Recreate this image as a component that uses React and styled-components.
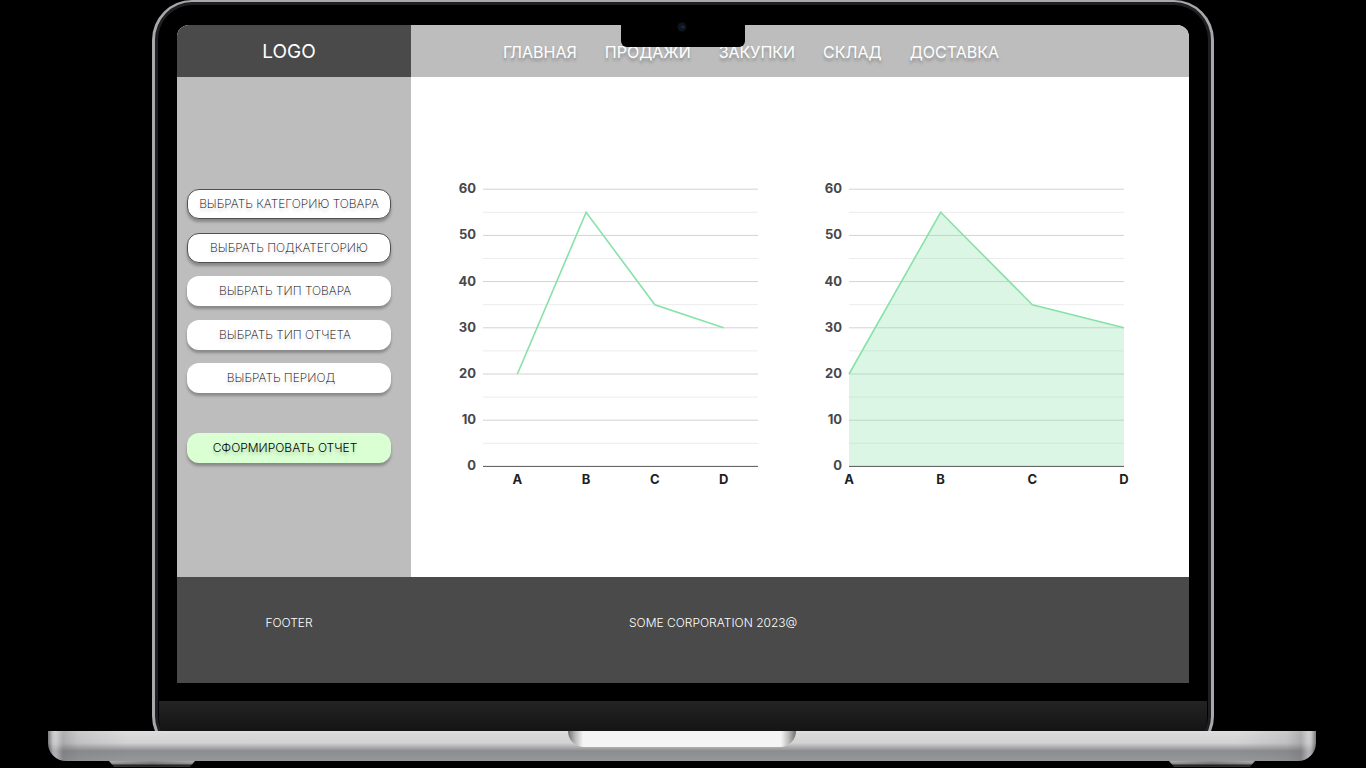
import React from "react";
import styled, { createGlobalStyle, css } from "styled-components";

const GlobalStyle = createGlobalStyle`
  *, *::before, *::after { box-sizing: border-box; }
  body {
    margin: 0;
    background: #000;
    color: #fff;
    font-family: Inter, "Liberation Sans", sans-serif;
  }
`;

const Page = styled.div`
  min-height: 100vh;
  overflow: hidden;
`;

/* Laptop */

const LidClip = styled.div`
  margin: 0 152px;
  overflow: hidden;
`;

const Lid = styled.div`
  margin-bottom: -25px;
  padding: 23px 22px 0;
  border: 3px solid #a8a8ac;
  border-top-width: 2px;
  border-radius: 40px;
  box-shadow: inset 0 0 0 3px #1f1f21;
  background: #000;
`;

const Chin = styled.div`
  height: 52px;
  margin: 18px -18px 0;
  border-radius: 0 0 34px 34px;
  background: linear-gradient(#232323, #141414 30px);
`;

const Base = styled.div`
  display: flex;
  justify-content: center;
  position: relative;
  height: 30px;
  margin: 0 50px 0 48px;
  border-radius: 0 0 18px 18px;
  background:
    linear-gradient(
      90deg,
      rgba(60, 60, 64, 0.6) 0,
      rgba(190, 190, 194, 0.6) 5px,
      rgba(200, 200, 204, 0.6) 8px,
      rgba(110, 110, 114, 0.4) 15px,
      rgba(120, 120, 124, 0.2) 30px,
      rgba(130, 130, 134, 0) 80px,
      rgba(130, 130, 134, 0) calc(100% - 80px),
      rgba(120, 120, 124, 0.2) calc(100% - 30px),
      rgba(110, 110, 114, 0.4) calc(100% - 15px),
      rgba(200, 200, 204, 0.6) calc(100% - 8px),
      rgba(190, 190, 194, 0.6) calc(100% - 5px),
      rgba(60, 60, 64, 0.6) 100%
    ),
    linear-gradient(#e2dde1 0, #dadada 3px, #d2d2d3 12px, #8b8c8e 20px, #97989a 30px);
`;

const Thumb = styled.div`
  width: 228px;
  height: 16px;
  border-radius: 0 0 16px 16px;
  background: linear-gradient(90deg, #6e6e70, #b8b8b8 7px, #f4f4f4 15px, #f4f4f4 calc(100% - 15px), #b8b8b8 calc(100% - 7px), #6e6e70);
`;

const Feet = styled.div`
  display: flex;
  justify-content: space-between;
  margin: 0 111px 0 109px;
`;

const Foot = styled.div`
  width: 86px;
  height: 6px;
  clip-path: polygon(0 0, 100% 0, 94% 100%, 6% 100%);
  background:
    linear-gradient(90deg, #99999900, #00000033 50%, #99999900),
    linear-gradient(#b0b1b0 0, #8b8c8b 3px, #262726 4px, #3b3c3b 6px);
`;

/* Application window */

const Screen = styled.div`
  position: relative;
  background: #fff;
  border-radius: 12px 12px 0 0;
`;

const Notch = styled.div`
  position: absolute;
  top: 0;
  left: 50%;
  width: 124px;
  height: 22px;
  margin-left: -62px;
  border-radius: 0 0 6px 6px;
  background: #000;
`;

const Camera = styled.svg`
  position: absolute;
  top: -3px;
  left: 56px;
  width: 10px;
  height: 10px;
`;

const columns = css`
  display: grid;
  grid-template-columns: 234px 1fr;
`;

const Header = styled.header`
  ${columns}
  height: 52px;
  border-radius: 12px 12px 0 0;
  overflow: hidden;
  background: #bdbdbd;
`;

const Logo = styled.a`
  display: flex;
  align-items: center;
  justify-content: center;
  padding-right: 10px;
  background: #4a4a4a;
  color: #fff;
  font-size: 19px;
  text-decoration: none;
`;

const Nav = styled.nav`
  display: flex;
  align-items: center;
  gap: 28px;
  padding: 1px 0 0 92px;
`;

const NavLink = styled.a`
  color: #fff;
  font-size: 16px;
  font-weight: 400;
  text-decoration: none;
  text-shadow: 0 3px 3px rgba(0, 0, 0, 0.25);
`;

const Body = styled.div`
  ${columns}
  min-height: 500px;
`;

const Sidebar = styled.aside`
  padding: 112px 20px 0 10px;
  background: #bdbdbd;
`;

const Filters = styled.div`
  display: flex;
  flex-direction: column;
  justify-content: space-between;
  min-height: 204px;
  margin-bottom: 40px;
`;

const Button = styled.button`
  display: block;
  width: 100%;
  height: 30px;
  padding: 0 ${(p) => p.$trail || 0}px 1px 0;
  border: 1px solid ${(p) => (p.$outlined ? "#505050" : "transparent")};
  border-radius: 12px;
  background: ${(p) => (p.$primary ? "#d9ffd2" : "#fff")};
  box-shadow: 0 3px 3px rgba(0, 0, 0, 0.28);
  color: #000;
  font-family: inherit;
  font-size: 12px;
  font-weight: ${(p) => (p.$primary ? 300 : 200)};
  text-align: center;
  white-space: nowrap;
  text-shadow: 0 3px 3px rgba(0, 0, 0, 0.2);
`;

const Charts = styled.main`
  display: flex;
  align-items: flex-start;
  gap: 56px;
  padding: 103px 60px 0 42px;
`;

const ChartFrame = styled.svg`
  flex: 1;
  min-width: 0;
  overflow: visible;
`;

const AxisLabel = styled.text`
  fill: ${(p) => (p.$dark ? "#1f1f1f" : "#464749")};
  font-size: 13px;
  font-weight: 700;
`;

const Footer = styled.footer`
  ${columns}
  height: 106px;
  padding-top: 38px;
  background: #4a4a4a;
  font-size: 12px;
  font-weight: 300;
  line-height: 16px;
`;

const FooterLabel = styled.span`
  padding-right: 10px;
  text-align: center;
`;

const Copyright = styled.span`
  padding-left: 218px;
`;

const NAV = ["ГЛАВНАЯ", "ПРОДАЖИ", "ЗАКУПКИ", "СКЛАД", "ДОСТАВКА"];

const FILTERS = [
  { label: "ВЫБРАТЬ КАТЕГОРИЮ ТОВАРА", outlined: true },
  { label: "ВЫБРАТЬ ПОДКАТЕГОРИЮ", outlined: true },
  { label: "ВЫБРАТЬ ТИП ТОВАРА", trail: 8 },
  { label: "ВЫБРАТЬ ТИП ОТЧЕТА", trail: 8 },
  { label: "ВЫБРАТЬ ПЕРИОД", trail: 16 },
];

const DATA = [
  { name: "A", value: 20 },
  { name: "B", value: 55 },
  { name: "C", value: 35 },
  { name: "D", value: 30 },
];

const LEFT = 30;
const WIDTH = 275;
const BOTTOM = 286.4;
const TICKS = Array.from({ length: 13 }, (_, i) => i * 5);
const toY = (v) => BOTTOM - v * 4.62;

function Chart({ title, area }) {
  const points = DATA.map((d, i) => ({
    ...d,
    x: area
      ? LEFT + (i * WIDTH) / (DATA.length - 1)
      : LEFT + ((i + 0.5) * WIDTH) / DATA.length,
    y: toY(d.value),
  }));
  const line = points.map((p) => `${p.x},${p.y}`).join(" ");
  return (
    <ChartFrame viewBox="0 0 310 310" role="img" aria-label={title}>
      {TICKS.map((v) => (
        <g key={v}>
          {v > 0 && (
            <line
              x1={LEFT}
              x2={LEFT + WIDTH}
              y1={toY(v)}
              y2={toY(v)}
              stroke={v % 10 ? "#ececec" : "#d3d3d4"}
            />
          )}
          {v % 10 === 0 && (
            <AxisLabel x={LEFT - 7} y={toY(v) + 4} textAnchor="end">
              {v}
            </AxisLabel>
          )}
        </g>
      ))}
      {area && (
        <polygon
          points={`${LEFT},${BOTTOM} ${line} ${LEFT + WIDTH},${BOTTOM}`}
          fill="#87e2a8"
          fillOpacity="0.3"
        />
      )}
      <polyline points={line} fill="none" stroke="#87e2a8" strokeWidth="1.6" />
      <line x1={LEFT} x2={LEFT + WIDTH} y1={BOTTOM} y2={BOTTOM} stroke="#555658" />
      {points.map((p) => (
        <AxisLabel key={p.name} $dark x={p.x} y="304" textAnchor="middle">
          {p.name}
        </AxisLabel>
      ))}
    </ChartFrame>
  );
}

export default function App() {
  return (
    <Page>
      <GlobalStyle />
      <LidClip>
        <Lid>
          <Screen>
            <Header>
              <Logo href="#">LOGO</Logo>
              <Nav>
                {NAV.map((item) => (
                  <NavLink key={item} href="#">
                    {item}
                  </NavLink>
                ))}
              </Nav>
            </Header>
            <Body>
              <Sidebar>
                <Filters>
                  {FILTERS.map((f) => (
                    <Button key={f.label} type="button" $outlined={f.outlined} $trail={f.trail}>
                      {f.label}
                    </Button>
                  ))}
                </Filters>
                <Button type="button" $primary $trail={8}>
                  СФОРМИРОВАТЬ ОТЧЕТ
                </Button>
              </Sidebar>
              <Charts>
                <Chart title="Line chart" />
                <Chart title="Area chart" area />
              </Charts>
            </Body>
            <Footer>
              <FooterLabel>FOOTER</FooterLabel>
              <Copyright>SOME CORPORATION 2023@</Copyright>
            </Footer>
            <Notch>
              <Camera viewBox="0 0 10 10" aria-hidden="true">
                <circle cx="5" cy="5" r="4.5" fill="#121314" />
                <circle cx="5" cy="5" r="2.5" fill="#0c1a2c" />
                <circle cx="6" cy="5" r="1" fill="#173a66" />
              </Camera>
            </Notch>
          </Screen>
          <Chin />
        </Lid>
      </LidClip>
      <Base>
        <Thumb />
      </Base>
      <Feet>
        <Foot />
        <Foot />
      </Feet>
    </Page>
  );
}
